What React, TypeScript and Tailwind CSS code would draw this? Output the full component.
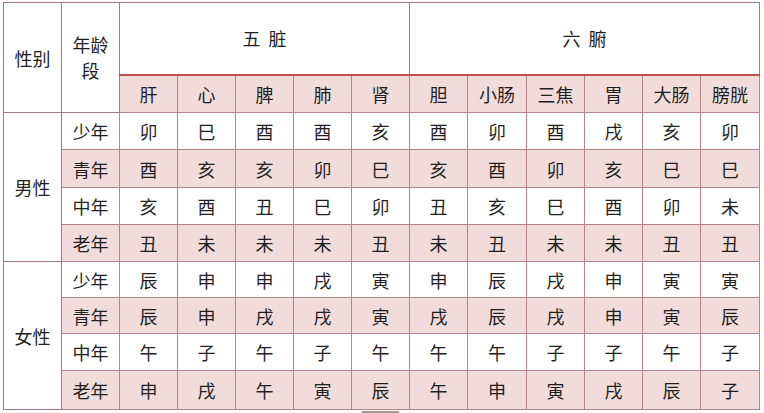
const organs = ["肝", "心", "脾", "肺", "肾", "胆", "小肠", "三焦", "胃", "大肠", "膀胱"];

const groups = [
  {
    sex: "男性",
    rows: [
      { age: "少年", v: ["卯", "巳", "酉", "酉", "亥", "酉", "卯", "酉", "戌", "亥", "卯"] },
      { age: "青年", v: ["酉", "亥", "亥", "卯", "巳", "亥", "酉", "卯", "亥", "巳", "巳"] },
      { age: "中年", v: ["亥", "酉", "丑", "巳", "卯", "丑", "亥", "巳", "酉", "卯", "未"] },
      { age: "老年", v: ["丑", "未", "未", "未", "丑", "未", "丑", "未", "未", "丑", "丑"] },
    ],
  },
  {
    sex: "女性",
    rows: [
      { age: "少年", v: ["辰", "申", "申", "戌", "寅", "申", "辰", "戌", "申", "寅", "寅"] },
      { age: "青年", v: ["辰", "申", "戌", "戌", "寅", "戌", "辰", "戌", "申", "寅", "辰"] },
      { age: "中年", v: ["午", "子", "午", "子", "午", "午", "午", "子", "子", "午", "子"] },
      { age: "老年", v: ["申", "戌", "午", "寅", "辰", "午", "申", "寅", "戌", "辰", "子"] },
    ],
  },
];

const widths = [58, 58, 58, 58, 58, 58, 58, 58, 59, 58, 58, 58, 59];
const rowHeights = [37, 38, 37, 37, 36, 36, 37, 39];

export default function App() {
  return (
    <div
      className="w-[764px] h-[413px] bg-white text-[#1f1f1f] overflow-hidden"
      style={{ fontFamily: '"Noto Sans CJK SC", "Noto Sans", sans-serif' }}
    >
      <table className="ml-[3px] mt-[2px] table-fixed border-collapse text-[18px] leading-none">
        <colgroup>
          {widths.map((w, i) => (
            <col key={i} style={{ width: w }} />
          ))}
        </colgroup>
        <tbody>
          <tr className="h-[72px]">
            <td rowSpan={2} className="border border-[#9c7c82] text-center">
              性别
            </td>
            <td rowSpan={2} className="border border-[#9c7c82] text-center leading-[26px] pb-[2px]">
              年龄
              <br />
              段
            </td>
            <td colSpan={5} className="border border-[#9c7c82] border-b-2 border-b-[#c0504d] text-center">
              五<span className="ml-[8px]">脏</span>
            </td>
            <td colSpan={6} className="border border-[#9c7c82] border-b-2 border-b-[#c0504d] text-center">
              六<span className="ml-[8px]">腑</span>
            </td>
          </tr>
          <tr className="h-[38px] bg-[#f2dcdb]">
            {organs.map((o) => (
              <td key={o} className="border border-[#b4868c] text-center">
                {o}
              </td>
            ))}
          </tr>
          {groups.map((g, gi) =>
            g.rows.map((r, ri) => (
              <tr key={g.sex + r.age} style={{ height: rowHeights[gi * 4 + ri] }}>
                {ri === 0 && (
                  <td rowSpan={4} className="border border-[#9c7c82] bg-white text-center">
                    {g.sex}
                  </td>
                )}
                <td
                  className={`border border-[#b4868c] text-center ${ri % 2 === 1 ? "bg-[#f2dcdb]" : "bg-white"}`}
                >
                  {r.age}
                </td>
                {r.v.map((c, ci) => (
                  <td
                    key={ci}
                    className={`border border-[#b4868c] text-center ${ri % 2 === 1 ? "bg-[#f2dcdb]" : "bg-white"}`}
                  >
                    {c}
                  </td>
                ))}
              </tr>
            ))
          )}
        </tbody>
      </table>
      <div className="ml-[362px] mt-[1px] h-[2px] w-[37px] bg-[#9a9a9a]" />
    </div>
  );
}
